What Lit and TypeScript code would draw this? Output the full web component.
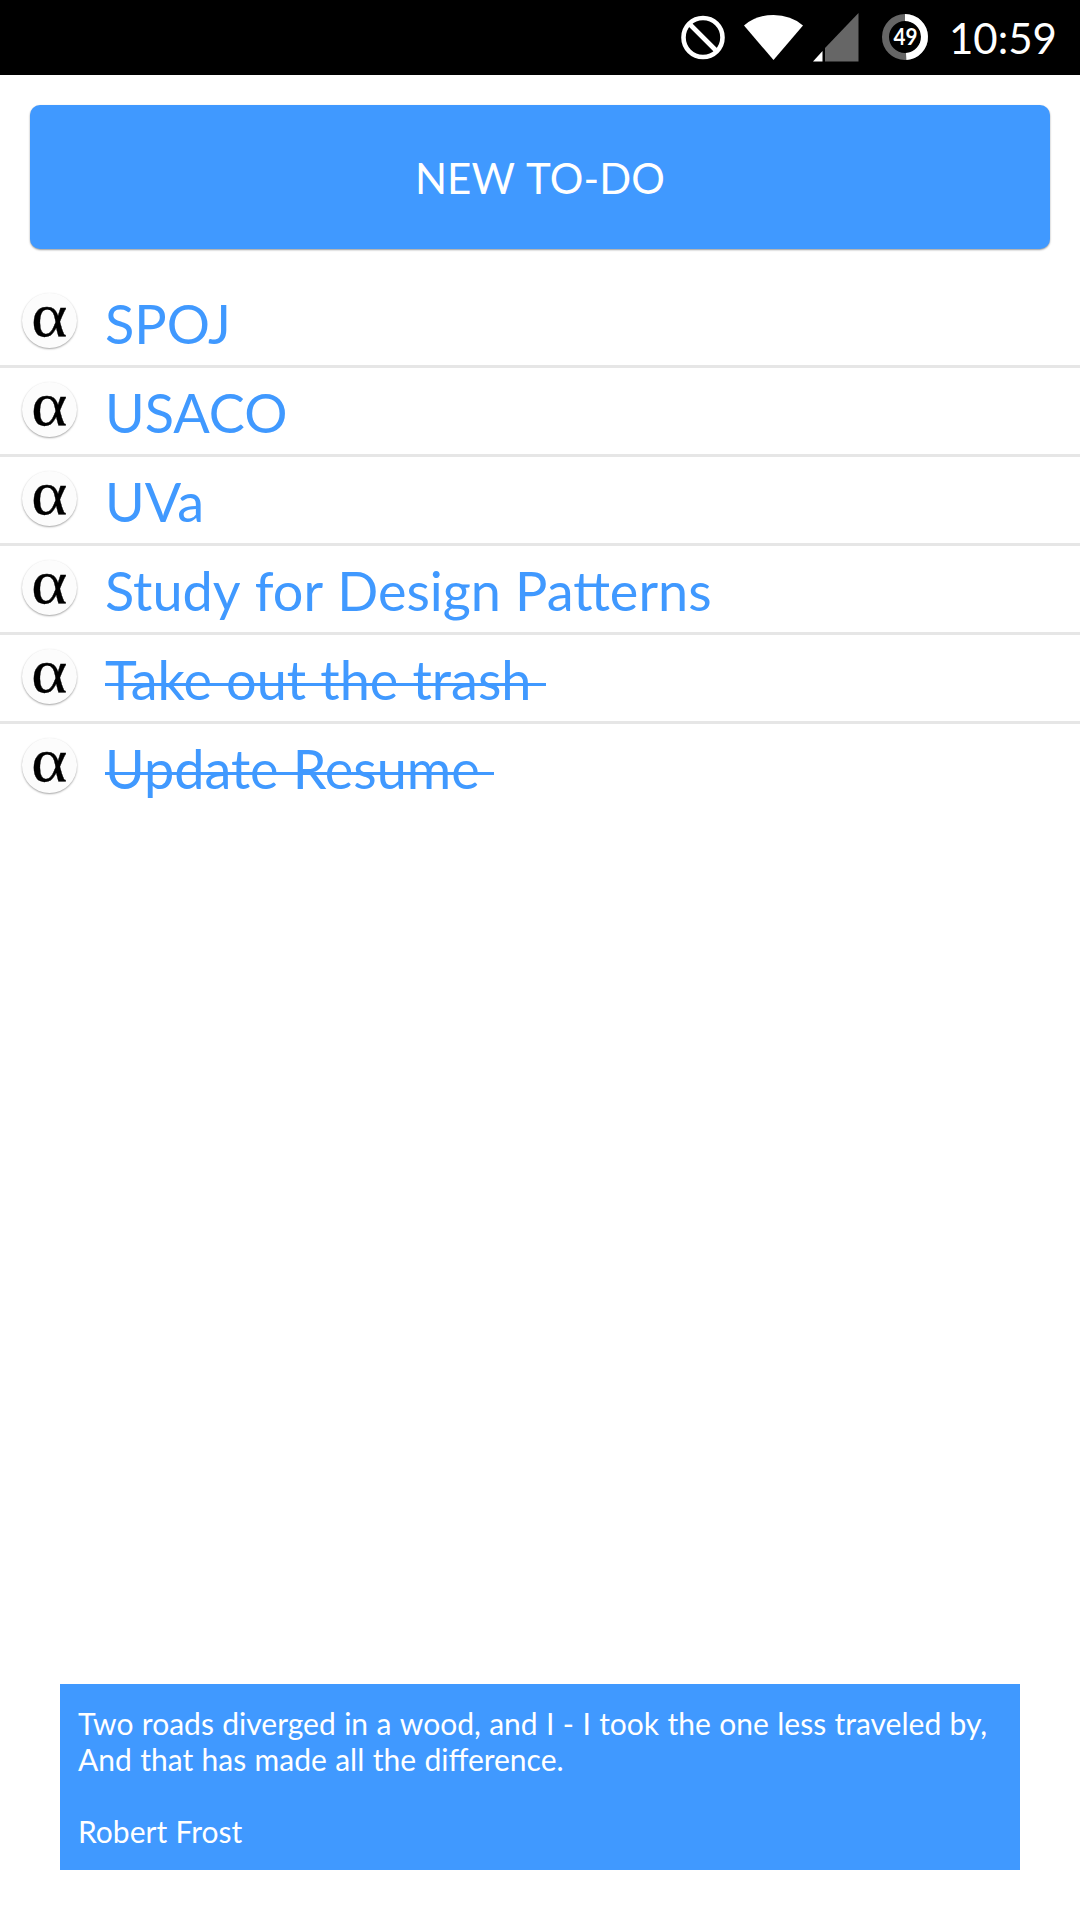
import { LitElement, html, css, svg } from "lit";
import { customElement } from "lit/decorators.js";

interface Todo { label: string; done: boolean }

const TODOS: Todo[] = [
  { label: "SPOJ", done: false },
  { label: "USACO", done: false },
  { label: "UVa", done: false },
  { label: "Study for Design Patterns", done: false },
  { label: "Take out the trash ", done: true },
  { label: "Update Resume ", done: true },
];

const QUOTE = [
  "Two roads diverged in a wood, and I - I took the one less traveled by,",
  "And that has made all the difference.",
  "",
  "Robert Frost",
];

// Each word is shaped on its own, so no kerning is applied against spaces.
const words = (text: string) =>
  text.split(" ").map((w, i) => html`${i ? " " : ""}<span class="word">${w}</span>`);

@customElement("status-bar")
class StatusBar extends LitElement {
  static styles = css`
    :host { display: block; height: 75px; background: #000; flex: none; }
    svg { display: block; }
    .num { font: 700 23.5px Lato, sans-serif; fill: #fff; }
    .time { font: 42px Lato, sans-serif; fill: #fff; }
  `;
  render() {
    return html`<svg width="1080" height="75" viewBox="0 0 1080 75">${svg`
      <circle cx="703" cy="37.500" r="19.500" fill="none" stroke="#fff" stroke-width="4.600"/>
      <path d="M689.500 24L716.500 51" stroke="#fff" stroke-width="4.600"/>
      <path d="M744 25.500Q756 15 773.500 15T803 25.500L773.500 60Z" fill="#fff"/>
      <path d="M858.500 13V61.500H825V48Z" fill="#666"/>
      <path d="M822.500 51V61.500H813Z" fill="#fff"/>
      <circle cx="905" cy="37" r="19.500" fill="none" stroke="#666" stroke-width="7"/>
      <path d="M905 17.500A19.500 19.500 0 0 1 906.200 56.460" fill="none" stroke="#fff" stroke-width="7"/>
      <text class="num" x="893.500" y="45" textLength="24" lengthAdjust="spacingAndGlyphs">49</text>
      <text class="time" x="949" y="54">10:59</text>`}
    </svg>`;
  }
}

@customElement("app-root")
class AppRoot extends LitElement {
  static styles = css`
    :host { display: flex; flex-direction: column; box-sizing: border-box; width: 1080px; height: 1920px; background: #fff; font-family: Lato, sans-serif; color: #4099ff; overflow: hidden; }
    .new { display: block; margin: 30px 30px 0; height: 144px; flex: none; padding: 2px 0 0; border: 0; border-radius: 10px; background: #4099ff; color: #fff; font: 42px Lato, sans-serif; letter-spacing: .15px; box-shadow: 0 1px 2px rgba(0,0,0,.4); }
    .word { display: inline-block; }
    .list { list-style: none; margin: 30px 0 0; padding: 0; flex: 1; }
    .row { display: flex; align-items: flex-start; box-sizing: border-box; height: 89px; padding-left: 22px; border-bottom: 3px solid #e6e6e6; font-size: 54px; }
    .row:last-child { border-bottom-color: transparent; }
    .icon { width: 55px; height: 55px; margin: 14px 28px 0 0; flex: none; box-sizing: border-box; border-radius: 50%; background: #fcfcfc; box-shadow: 0 1px 2px rgba(0,0,0,.36); color: #000; font: 62px/44px "Liberation Serif", serif; text-align: center; }
    .glyph { display: inline-block; transform: scaleX(1.11); -webkit-text-stroke: .3px #000; }
    .label { white-space: pre; height: 86px; line-height: 89px; word-spacing: .3px; }
    .done { background: linear-gradient(#4099ff, #4099ff) 0 48px / 100% 3px no-repeat; }
    .quote { margin: 0 60px 50px; box-sizing: border-box; height: 186px; padding: 21px 18px; background: #4099ff; color: #fff; font-size: 30px; line-height: 36px; }
    .line { height: 36px; white-space: pre; word-spacing: .7px; }
  `;
  render() {
    return html`
      <status-bar></status-bar>
      <button class="new">${words("NEW TO-DO")}</button>
      <ul class="list">${TODOS.map((t) => html`
        <li class="row">
          <span class="icon"><span class="glyph">α</span></span>
          <span class="label ${t.done ? "done" : ""}">${words(t.label)}</span>
        </li>`)}
      </ul>
      <div class="quote">${QUOTE.map((l) => html`<div class="line">${words(l)}</div>`)}</div>`;
  }
}
